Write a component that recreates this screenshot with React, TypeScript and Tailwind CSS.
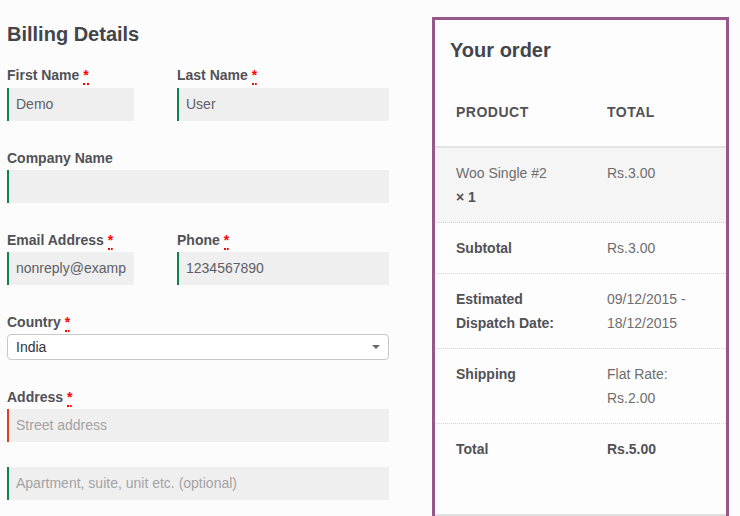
const font = { fontFamily: '"Liberation Sans", Arial, sans-serif' };

function Req() {
  return (
    <abbr
      title="required"
      className="ml-[4px] text-[#ff0000] no-underline border-b-2 border-dotted border-[#ff0000] leading-none"
    >
      *
    </abbr>
  );
}

function Label({ text, required }: { text: string; required?: boolean }) {
  return (
    <label className="block h-[20px] text-[14px] leading-[20px] font-bold text-[#515157]">
      {text}
      {required && <Req />}
    </label>
  );
}

function Input({
  value,
  placeholder,
  invalid,
  className = "",
}: {
  value?: string;
  placeholder?: string;
  invalid?: boolean;
  className?: string;
}) {
  return (
    <div
      className={`h-[33px] bg-[#efefef] border-l-2 ${
        invalid ? "border-[#e2401c]" : "border-[#0f834d]"
      } pl-[7px] flex items-center overflow-hidden whitespace-nowrap text-[14px] ${className}`}
    >
      {value ? (
        <span className="text-[#5e5e66]">{value}</span>
      ) : (
        <span className="text-[#a3a3a3]">{placeholder}</span>
      )}
    </div>
  );
}

const rows = [
  { label: ["Subtotal"], value: ["Rs.3.00"] },
  { label: ["Estimated", "Dispatch Date:"], value: ["09/12/2015 -", "18/12/2015"] },
  { label: ["Shipping"], value: ["Flat Rate:", "Rs.2.00"] },
];

export default function App() {
  return (
    <div className="w-[740px] h-[516px] overflow-hidden bg-[#fcfcfc] flex pl-[7px]" style={font}>
      <div className="w-[382px] flex flex-col">
        <h3 className="mt-[22px] text-[20px] leading-[24px] font-bold text-[#43454b]">Billing Details</h3>

        <div className="mt-[19px] flex">
          <div className="w-[170px]">
            <Label text="First Name" required />
            <div className="mt-[3px] w-[127px]">
              <Input value="Demo" />
            </div>
          </div>
          <div className="flex-1">
            <Label text="Last Name" required />
            <div className="mt-[3px]">
              <Input value="User" />
            </div>
          </div>
        </div>

        <div className="mt-[27px]">
          <Label text="Company Name" />
          <div className="mt-[2px]">
            <Input />
          </div>
        </div>

        <div className="mt-[27px] flex">
          <div className="w-[170px]">
            <Label text="Email Address" required />
            <div className="mt-[2px] w-[127px]">
              <Input value="nonreply@examp" />
            </div>
          </div>
          <div className="flex-1">
            <Label text="Phone" required />
            <div className="mt-[2px]">
              <Input value="1234567890" />
            </div>
          </div>
        </div>

        <div className="mt-[27px]">
          <Label text="Country" required />
          <div className="mt-[2px] h-[26px] bg-white border border-[#c8c8c8] rounded-[4px] flex items-center justify-between pl-[8px] pr-[7px]">
            <span className="text-[14px] text-[#333]">India</span>
            <svg width="10" height="6" viewBox="0 0 10 6">
              <path d="M1 1h8L5 5z" fill="#666" />
            </svg>
          </div>
        </div>

        <div className="mt-[27px]">
          <Label text="Address" required />
          <div className="mt-[2px]">
            <Input placeholder="Street address" invalid />
          </div>
        </div>

        <div className="mt-[25px]">
          <Input placeholder="Apartment, suite, unit etc. (optional)" />
        </div>
      </div>

      <div className="ml-[43px] mt-[17px] w-[297px] h-[520px] border-[3px] border-[#96588a] bg-[#fdfdfd] flex flex-col">
        <h3 className="mt-[18px] ml-[15px] text-[20px] leading-[24px] font-bold text-[#43454b]">Your order</h3>
        <div className="flex pt-[38px] pb-[22px] border-b-2 border-[#e4e4e4] text-[14px] leading-[24px] font-bold text-[#515157] uppercase tracking-[0.5px]">
          <div className="w-[172px] pl-[21px]">Product</div>
          <div className="flex-1">Total</div>
        </div>
        <div className="flex py-[13px] bg-[#f5f5f5] border-b border-dotted border-[#d6d6d6] text-[14px] leading-[24px]">
          <div className="w-[172px] pl-[21px] text-[#6d6d6d]">
            Woo Single #2
            <div className="font-bold text-[#515157]">× 1</div>
          </div>
          <div className="flex-1 text-[#6d6d6d]">Rs.3.00</div>
        </div>
        {rows.map((r) => (
          <div
            key={r.label[0]}
            className="flex py-[13px] border-b border-dotted border-[#d6d6d6] text-[14px] leading-[24px]"
          >
            <div className="w-[172px] pl-[21px] font-bold text-[#515157]">
              {r.label.map((l) => (
                <div key={l}>{l}</div>
              ))}
            </div>
            <div className="flex-1 text-[#6d6d6d]">
              {r.value.map((v) => (
                <div key={v}>{v}</div>
              ))}
            </div>
          </div>
        ))}
        <div className="flex py-[13px] text-[14px] leading-[24px] font-bold text-[#515157]">
          <div className="w-[172px] pl-[21px]">Total</div>
          <div className="flex-1">Rs.5.00</div>
        </div>
        <div className="mt-[40px] border-t-2 border-[#e0e0e0] bg-[#f2f2f2] flex-1" />
      </div>
    </div>
  );
}
